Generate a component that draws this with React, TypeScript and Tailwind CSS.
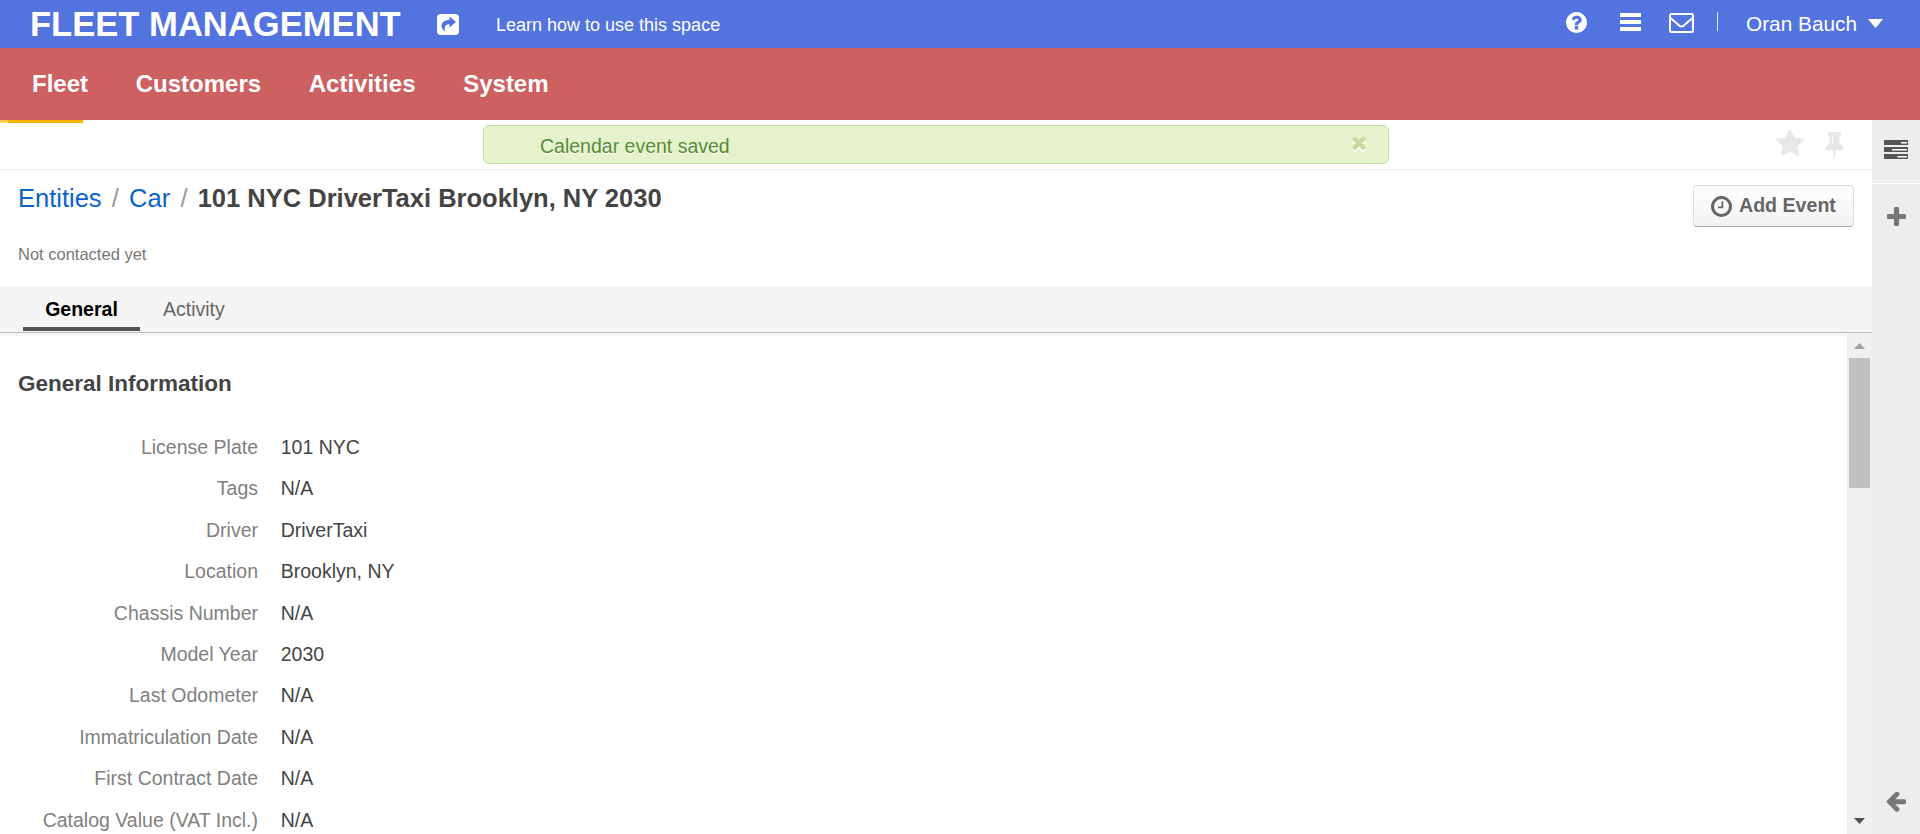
import React from "react";

function Glyph({ d, className, box = "0 0 1792 1792" }: { d: string; className: string; box?: string }) {
  return (
    <svg viewBox={box} className={className} fill="currentColor" aria-hidden="true">
      <path d={d} />
    </svg>
  );
}

const question =
  "M1024 1376v-192q0-14-9-23t-23-9h-192q-14 0-23 9t-9 23v192q0 14 9 23t23 9h192q14 0 23-9t9-23zm256-672q0-88-55.5-163t-138.5-116-170-41q-243 0-371 213-15 24 8 42l132 100q7 6 19 6 16 0 25-12 53-68 86-92 34-24 86-24 48 0 85.5 26t37.5 59q0 38-20 61t-68 45q-63 28-115.5 86.5t-52.5 125.5v36q0 14 9 23t23 9h192q14 0 23-9t9-23q0-19 21.5-49.5t54.5-49.5q32-18 49-28.5t46-35 44.5-48 28-60.5 12.5-81zm384 192q0 209-103 385.5t-279.5 279.5-385.5 103-385.5-103-279.5-279.5-103-385.5 103-385.5 279.5-279.5 385.5-103 385.5 103 279.5 279.5 103 385.5z";
const clock =
  "M1024 544v448q0 14-9 23t-23 9h-320q-14 0-23-9t-9-23v-64q0-14 9-23t23-9h224v-352q0-14 9-23t23-9h64q14 0 23 9t9 23zm416 352q0-148-73-273t-198-198-273-73-273 73-198 198-73 273 73 273 198 198 273 73 273-73 198-198 73-273zm224 0q0 209-103 385.5t-279.5 279.5-385.5 103-385.5-103-279.5-279.5-103-385.5 103-385.5 279.5-279.5 385.5-103 385.5 103 279.5 279.5 103 385.5z";
const star =
  "M1728 647q0 22-26 48l-363 354 86 500q1 7 1 20 0 21-10.5 35.5t-30.5 14.5q-19 0-40-12l-449-236-449 236q-22 12-40 12-21 0-31.5-14.5t-10.5-35.5q0-6 2-20l86-500-364-354q-25-27-25-48 0-37 56-46l502-73 225-455q19-41 49-41t49 41l225 455 502 73q56 9 56 46z";
const pin =
  "M800 864v-448q0-14-9-23t-23-9-23 9-9 23v448q0 14 9 23t23 9 23-9 9-23zm672 352q0 26-19 45t-45 19h-429l-51 483q-2 12-10.5 20.5t-20.5 8.5h-1q-27 0-32-27l-76-485h-404q-26 0-45-19t-19-45q0-123 78.5-221.5t177.5-98.5v-512q-52 0-90-38t-38-90 38-90 90-38h640q52 0 90 38t38 90-38 90-90 38v512q99 0 177.5 98.5t78.5 221.5z";
const plus =
  "M1600 736v192q0 40-28 68t-68 28h-416v416q0 40-28 68t-68 28h-192q-40 0-68-28t-28-68v-416h-416q-40 0-68-28t-28-68v-192q0-40 28-68t68-28h416v-416q0-40 28-68t68-28h192q40 0 68 28t28 68v416h416q40 0 68 28t28 68z";
const times =
  "M1490 1322q0 40-28 68l-136 136q-28 28-68 28t-68-28l-294-294-294 294q-28 28-68 28t-68-28l-136-136q-28-28-28-68t28-68l294-294-294-294q-28-28-28-68t28-68l136-136q28-28 68-28t68 28l294 294 294-294q28-28 68-28t68 28l136 136q28 28 28 68t-28 68l-294 294 294 294q28 28 28 68z";
const back =
  "M1664 896v128q0 53-32.5 90.5t-84.5 37.5h-704l293 294q38 36 38 90t-38 90l-75 76q-37 37-90 37-52 0-91-37l-651-652q-37-37-37-90 0-52 37-91l651-650q38-38 91-38 52 0 90 38l75 74q38 38 38 91t-38 91l-293 293h704q52 0 84.5 37.5t32.5 90.5z";

const fields: [string, string][] = [
  ["License Plate", "101 NYC"],
  ["Tags", "N/A"],
  ["Driver", "DriverTaxi"],
  ["Location", "Brooklyn, NY"],
  ["Chassis Number", "N/A"],
  ["Model Year", "2030"],
  ["Last Odometer", "N/A"],
  ["Immatriculation Date", "N/A"],
  ["First Contract Date", "N/A"],
  ["Catalog Value (VAT Incl.)", "N/A"],
];

function TopBar() {
  return (
    <header className="flex h-12 shrink-0 bg-[#5373df] text-white">
      <div className="flex h-12 w-[437px] pl-[30px] text-[34.600px] font-bold leading-[48px] whitespace-nowrap">
        FLEET MANAGEMENT
      </div>
      <svg viewBox="0 0 22 21" className="mt-[14px] h-[21px] w-[22px]" aria-hidden="true">
        <rect width="22" height="21" rx="4" fill="white" />
        <path d="M12.500 2.500 19 8l-6.500 5.500v-3.200C8.300 10.300 7 12.500 8 17.500 2.300 13.500 3.500 6 12.500 5.700z" fill="#5373df" />
      </svg>
      <div className="ml-[37px] text-[18px] leading-[50px] whitespace-nowrap">Learn how to use this space</div>
      <div className="ml-auto flex pr-[37px]">
        <Glyph d={question} box="128 128 1536 1536" className="mt-3 h-[21px] w-[21px]" />
        <div className="mt-[13px] ml-[33px] flex w-[21px] flex-col gap-[3px]">
          <i className="h-1 bg-white" />
          <i className="h-1 bg-white" />
          <i className="h-1 bg-white" />
        </div>
        <svg viewBox="0 0 25 20" className="mt-[13px] ml-7 h-5 w-[25px]" fill="none" stroke="white" strokeWidth="2" aria-hidden="true">
          <rect x="1" y="1" width="23" height="18" rx="1.500" />
          <path d="M1.500 5 10.500 12.700q2 1.700 4 0L23.500 5" />
        </svg>
        <i className="mt-3 ml-[23px] h-[19px] w-px bg-white/80" />
        <span className="ml-[28px] w-[113px] text-[20.800px] leading-[48px] whitespace-nowrap">Oran Bauch</span>
        <svg viewBox="0 0 15 9" className="mt-[19px] ml-[9px] h-[9px] w-[15px]" fill="white" aria-hidden="true">
          <path d="M0 0h15L8.500 8q-1 1-2 0z" />
        </svg>
      </div>
    </header>
  );
}

function Menu() {
  return (
    <nav className="flex h-[72px] shrink-0 gap-[47.700px] bg-[#cd6060] pl-[32px] text-[24px] leading-[72px] font-bold text-white">
      <a>Fleet</a>
      <a>Customers</a>
      <a>Activities</a>
      <a>System</a>
    </nav>
  );
}

function SideRail() {
  return (
    <aside className="flex w-12 shrink-0 flex-col items-center bg-[#ededed] text-[#777]">
      <div className="flex h-[64px] w-12 shrink-0 justify-center border-b border-white pt-5">
        <svg viewBox="0 0 24 19" className="h-[19px] w-6" aria-hidden="true">
          <path d="M0 0h24v5H0zM0 7h24v5H0zM0 14h24v5H0z" fill="#555" />
          <path d="M17 2h6v1.500h-6zM8 9h15v1.500H8zM13.500 16H23v1.500h-9.500z" fill="white" />
        </svg>
      </div>
      <Glyph d={plus} box="192 128 1408 1408" className="mt-[23px] h-[19px] w-[19px]" />
      <Glyph d={back} box="64 250 1600 1550" className="mt-auto mr-[2px] mb-[21px] h-[21px] w-[21px]" />
    </aside>
  );
}

export default function App() {
  return (
    <div className="flex h-[834px] w-[1920px] flex-col overflow-hidden bg-white font-['Liberation_Sans',Arial,sans-serif]">
      <TopBar />
      <Menu />
      <div className="flex min-h-0 grow">
        <main className="flex min-w-0 grow flex-col">
          <div className="flex h-[50px] shrink-0 border-b border-[#f0f0f0]">
            <div className="h-[3px] w-[83px] border-l-8 border-[#ffd04d] bg-[#fdb400]" />
            <div className="mt-[5px] ml-[400px] flex h-[39px] w-[906px] rounded-md border border-[#bfdf9f] bg-[#e6f2cb] pl-[56px] text-[19.500px] leading-[40px] text-[#528c33] [text-shadow:0_1px_0_#fff]">
              <span>Calendar event saved</span>
              <Glyph d={times} box="302 238 1188 1316" className="mt-[9px] mr-[22px] ml-auto h-[15px] w-[14px] text-[#c6dba2] drop-shadow-[0_2px_0_#fff]" />
            </div>
            <Glyph d={star} box="64 100 1664 1520" className="mt-[10px] ml-[387px] h-[26px] w-7 text-[#e7e7e7]" />
            <Glyph d={pin} box="320 0 1152 1792" className="mt-[10px] ml-[21px] h-7 w-[19px] text-[#e7e7e7]" />
          </div>
          <div className="flex h-[116px] shrink-0 justify-between pr-[18px] pl-[18px]">
            <div>
              <h1 className="mt-[10px] flex text-[25.500px] leading-[36px] whitespace-nowrap">
                <a className="text-[#0b62c9]">Entities</a>
                <span className="mx-[10.200px] text-[#999]">/</span>
                <a className="text-[#0b62c9]">Car</a>
                <span className="mx-[10.200px] text-[#999]">/</span>
                <b className="text-[#444]">101 NYC DriverTaxi Brooklyn, NY 2030</b>
              </h1>
              <p className="mt-[26px] text-[16.500px] leading-[24px] text-[#777]">Not contacted yet</p>
            </div>
            <button className="mt-[15px] flex h-[42px] w-[161px] rounded border border-[#ddd] border-b-[#aaa] bg-linear-to-b from-white to-[#f2f2f2] pl-[17px] text-[19.600px] leading-[38px] font-bold whitespace-nowrap text-[#666]">
              <Glyph d={clock} box="128 128 1536 1536" className="mt-[10px] mr-[7px] h-[21px] w-[21px] shrink-0" />
              Add Event
            </button>
          </div>
          <div className="flex h-[47px] shrink-0 border-b border-[#bbb] bg-[#f5f5f5] pl-[23px] text-[19.500px] leading-[47px]">
            <a className="mb-px w-[117px] border-b-4 border-[#555] text-center font-bold text-black">General</a>
            <a className="ml-[23px] text-[#666]">Activity</a>
          </div>
          <div className="flex min-h-0 grow">
            <section className="min-w-0 grow border-t-[3px] border-[#f7f7f7]">
              <h2 className="mt-[30px] ml-[18px] text-[22.500px] leading-[36px] font-bold text-[#444]">General Information</h2>
              <dl className="mt-[25px]">
                {fields.map(([label, value]) => (
                  <div key={label} className="flex h-[41.400px] text-[19.500px] leading-[41px]">
                    <dt className="w-[258px] text-right text-[#808080]">{label}</dt>
                    <dd className="ml-[22.700px] text-[#444]">{value}</dd>
                  </div>
                ))}
              </dl>
            </section>
            <div className="flex w-[25px] shrink-0 flex-col items-center bg-[#f0f0f0]">
              <svg viewBox="0 0 11 6" className="mt-[10px] h-[6px] w-[11px]" fill="#a0a0a0" aria-hidden="true">
                <path d="M5.500 0 11 6H0z" />
              </svg>
              <div className="mt-[9px] h-[130px] w-[21px] bg-[#c1c1c1]" />
              <svg viewBox="0 0 11 6" className="mt-auto mb-[10px] h-[6px] w-[11px]" fill="#505050" aria-hidden="true">
                <path d="M0 0h11L5.500 6z" />
              </svg>
            </div>
          </div>
        </main>
        <SideRail />
      </div>
    </div>
  );
}
